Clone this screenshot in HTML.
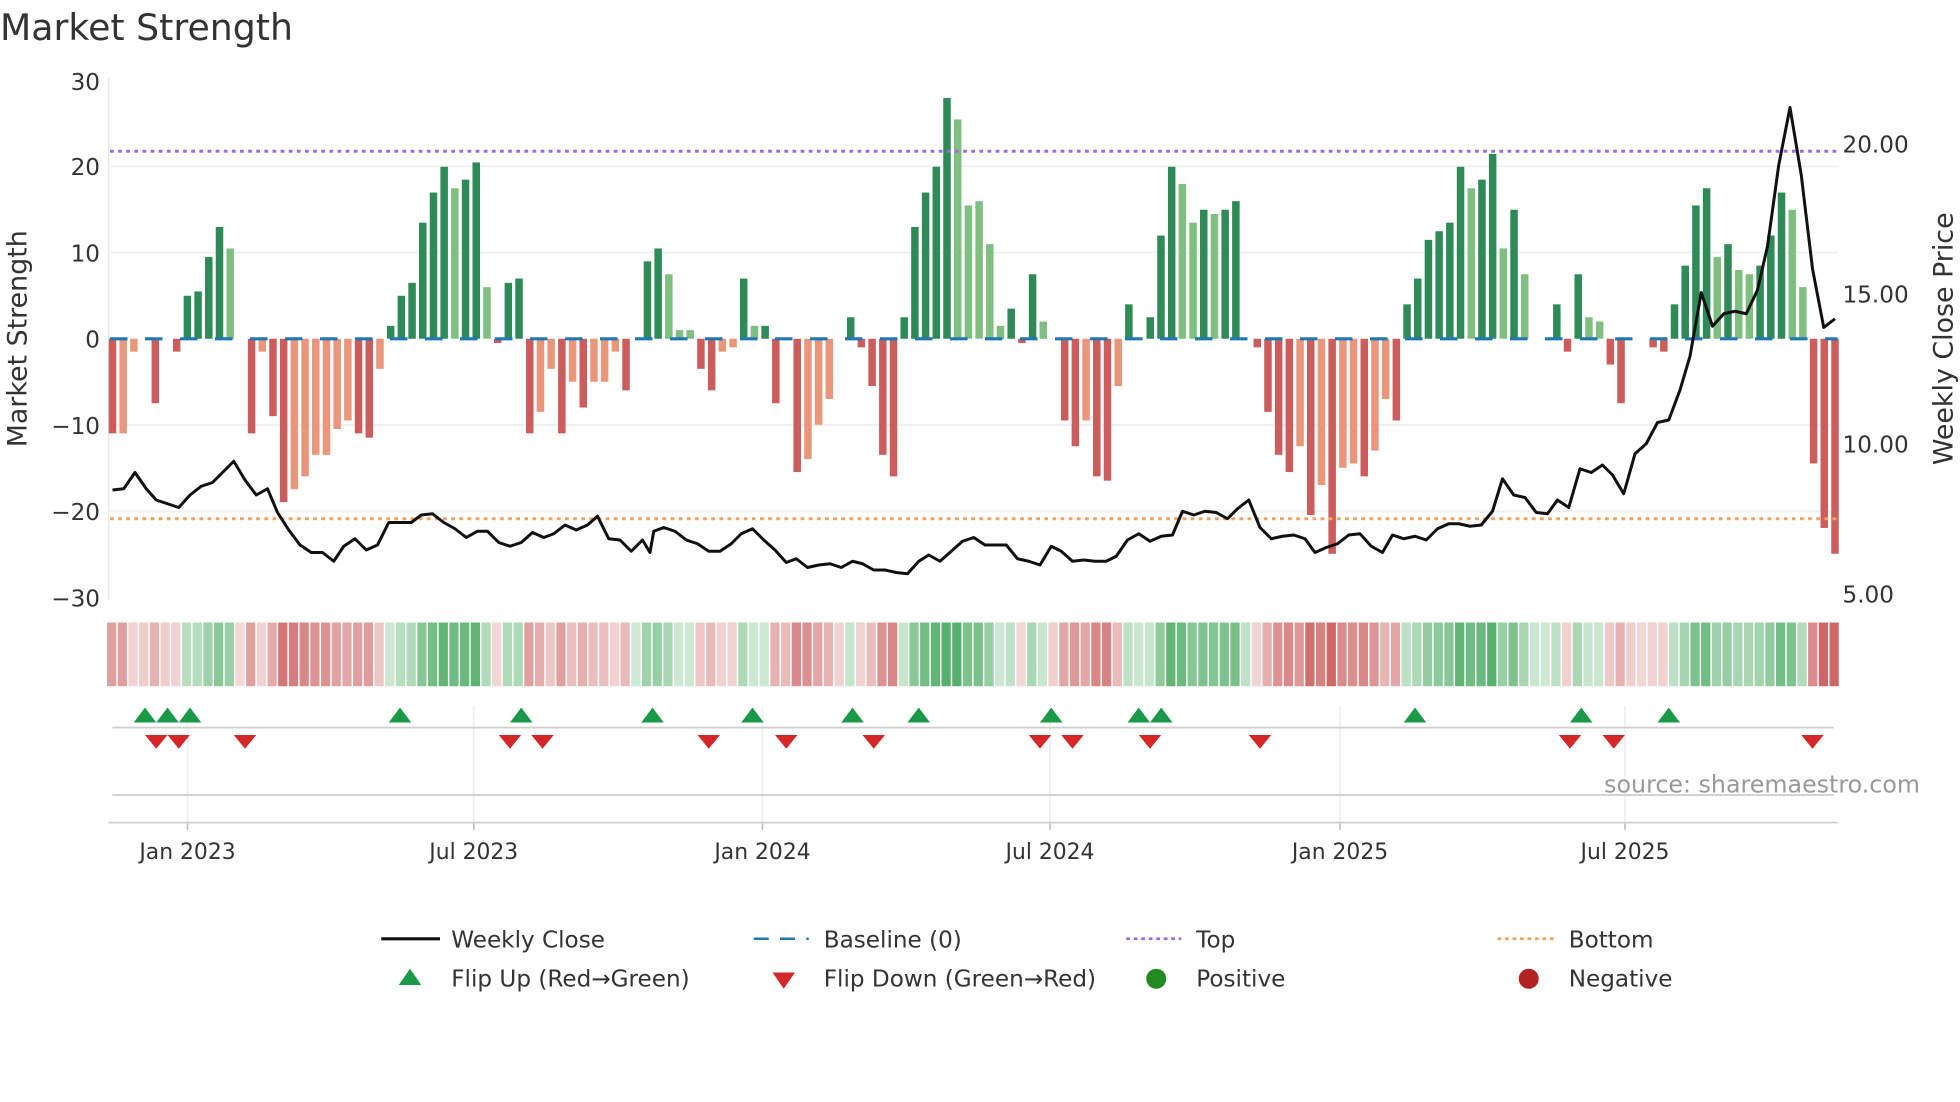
<!DOCTYPE html>
<html><head><meta charset="utf-8"><style>
html,body{margin:0;padding:0;background:#fff;width:1960px;height:1102px;overflow:hidden}
svg{display:block;font-family:"DejaVu Sans","Liberation Sans",sans-serif}
</style></head><body>
<svg id="s" width="1960" height="1102" viewBox="0 0 1568 881.6" xmlns="http://www.w3.org/2000/svg">
<rect width="1568" height="882" fill="#fff"/>
<text x="0" y="32" font-size="29" fill="#333">Market Strength</text>
<g id="grid"></g>
<g id="bars"></g>
<line x1="88" y1="271" x2="1470" y2="271" stroke="#1f77b4" stroke-width="2.5" stroke-dasharray="14,14"/>
<line x1="88" y1="121" x2="1470" y2="121" stroke="#9b6ee0" stroke-width="2.4" stroke-dasharray="3,3.5"/>
<line x1="88" y1="415" x2="1470" y2="415" stroke="#f4a261" stroke-width="2.4" stroke-dasharray="3,3.5"/>
<polyline id="price" fill="none" stroke="#111" stroke-width="2.4" stroke-linejoin="round"/>
<g id="strip"></g>
<g id="marks"></g>
<g font-size="18.5" fill="#333">
<text x="80" y="72" text-anchor="end">30</text>
<text x="80" y="140" text-anchor="end">20</text>
<text x="80" y="209" text-anchor="end">10</text>
<text x="80" y="278" text-anchor="end">0</text>
<text x="80" y="347" text-anchor="end">−10</text>
<text x="80" y="416" text-anchor="end">−20</text>
<text x="80" y="485" text-anchor="end">−30</text>
<text x="1474" y="122">20.00</text>
<text x="1474" y="242">15.00</text>
<text x="1474" y="362">10.00</text>
<text x="1474" y="482">5.00</text>
</g>
<text transform="translate(21,271) rotate(-90)" text-anchor="middle" font-size="21.5" fill="#333">Market Strength</text>
<text transform="translate(1562,271) rotate(-90)" text-anchor="middle" font-size="21.5" fill="#333">Weekly Close Price</text>
<text x="1536" y="634" text-anchor="end" font-size="19" fill="#999">source: sharemaestro.com</text>
<g font-size="17.5" fill="#333" text-anchor="middle">
<text x="150" y="687">Jan 2023</text><text x="379" y="687">Jul 2023</text><text x="610" y="687">Jan 2024</text>
<text x="840" y="687">Jul 2024</text><text x="1072" y="687">Jan 2025</text><text x="1300" y="687">Jul 2025</text>
</g>
<g font-size="18.5" fill="#333">
<line x1="305" y1="751" x2="352" y2="751" stroke="#111" stroke-width="2.5"/><text x="361" y="758">Weekly Close</text>
<line x1="603" y1="751" x2="647" y2="751" stroke="#1f77b4" stroke-width="2" stroke-dasharray="12,9"/><text x="659" y="758">Baseline (0)</text>
<line x1="901" y1="751" x2="945" y2="751" stroke="#9b6ee0" stroke-width="2.2" stroke-dasharray="3,3"/><text x="957" y="758">Top</text>
<line x1="1198" y1="751" x2="1243" y2="751" stroke="#f4a261" stroke-width="2.2" stroke-dasharray="3,3"/><text x="1255" y="758">Bottom</text>
<polygon points="319,788 337,788 328,775" fill="#1a9a48"/><text x="361" y="789">Flip Up (Red→Green)</text>
<polygon points="618,778 636,778 627,791" fill="#d62728"/><text x="659" y="789">Flip Down (Green→Red)</text>
<circle cx="925" cy="783" r="8" fill="#228b22"/><text x="957" y="789">Positive</text>
<circle cx="1223" cy="783" r="8" fill="#b22222"/><text x="1255" y="789">Negative</text>
</g>
</svg>
<script>
var NS="http://www.w3.org/2000/svg";
function el(p,t,a){var e=document.createElementNS(NS,t);for(var k in a)e.setAttribute(k,a[k]);document.getElementById(p).appendChild(e);return e;}
[133,202,340,409].forEach(function(y){el("grid","line",{x1:88,x2:1470,y1:y,y2:y,stroke:"#eef0f3","stroke-width":1.5});});
el("grid","line",{x1:87,x2:87,y1:62,y2:480,stroke:"#e6e6e6","stroke-width":1});
[150,379,610,840,1072,1300].forEach(function(x){el("grid","line",{x1:x,x2:x,y1:565,y2:658,stroke:"#eef0f5","stroke-width":1.5});el("grid","line",{x1:x,x2:x,y1:658,y2:664,stroke:"#bbb","stroke-width":1.2});});
el("grid","line",{x1:90,x2:1467,y1:582,y2:582,stroke:"#d0d0d0","stroke-width":1.5});
el("grid","line",{x1:90,x2:1467,y1:636,y2:636,stroke:"#d0d0d0","stroke-width":1.5});
el("grid","line",{x1:87,x2:1470,y1:658,y2:658,stroke:"#d0d0d0","stroke-width":1.5});
var B="-11r -11s -1.5s 0z -7.5r 0z -1.5r 5g 5.5g 9.5g 13g 10.5l 0z -11r -1.5s -9r -19r -17.5s -16s -13.5s -13.5s -10.5s -9.5s -11r -11.5r -3.5s 1.5g 5g 6.5g 13.5g 17g 20g 17.5l 18.5g 20.5g 6l -0.5r 6.5g 7g -11r -8.5s -3.5s -11r -5s -8r -5s -5s -1.5s -6r 0z 9g 10.5g 7.5l 1l 1l -3.5r -6r -1.5s -1s 7g 1.5l 1.5g -7.5r 0z -15.5r -14s -10s -7s 0z 2.5g -1r -5.5r -13.5r -16r 2.5g 13g 17g 20g 28g 25.5l 15.5l 16l 11l 1.5l 3.5g -0.5r 7.5g 2l 0z -9.5r -12.5r -9.5s -16r -16.5r -5.5s 4g 0z 2.5g 12g 20g 18l 13.5l 15g 14.5l 15g 16g 0z -1r -8.5r -13.5r -15.5r -12.5s -20.5r -17s -25r -15s -14.5s -16r -13s -7s -9.5r 4g 7g 11.5g 12.5g 13.5g 20g 17.5l 18.5g 21.5g 10.5l 15g 7.5l 0z 0z 4g -1.5r 7.5g 2.5l 2l -3r -7.5r 0z 0z -1r -1.5r 4g 8.5g 15.5g 17.5g 9.5l 11g 8l 7.5l 8.5g 12g 17g 15l 6l -14.5r -22r -25r".split(" ");
var N=B.length, x0=90, x1=1468, dx=(x1-x0)/(N-1);
var C={g:"#2e8b57",l:"#7fbf7f",r:"#cd5c5c",s:"#e9967a"};
var vals=[];
B.forEach(function(t,i){var v=parseFloat(t),c=t.slice(-1);vals.push(v);var x=x0+i*dx;
 if(c!="z"){var y0=271,y=271-v*6.88;el("bars","rect",{x:x-3,y:Math.min(y,y0),width:6,height:Math.max(Math.abs(y-y0),1.5),fill:C[c]});}});
vals.forEach(function(v,i){var x=x0+i*dx;var s=v;if(v==0){var a=vals[i-1]||0,b=vals[i+1]||0;s=(a+b)/4;}
 var m=Math.min(Math.abs(s)/22,1),al=0.22+0.65*m;var col=s>=0?"rgba(60,165,85,"+al+")":"rgba(200,80,80,"+al+")";
 el("strip","rect",{x:x-4.4,y:498,width:7.4,height:51,fill:col});});
var P=[[90,392],[99,391],[108,378],[117,391],[125,400],[134,403],[143,406],[152,396],[161,389],[170,386],[178,378],[187,369],[196,384],[205,396],[214,391],[222,410],[231,424],[240,436],[249,442],[258,442],[267,449],[275,437],[284,431],[293,440],[302,436],[311,418],[320,418],[329,418],[337,412],[346,411],[355,418],[364,423],[373,430],[382,425],[390,425],[399,434],[408,437],[417,434],[426,426],[435,430],[443,427],[452,420],[461,424],[470,420],[478,413],[487,431],[496,432],[505,441],[514,432],[520,442],[523,425],[531,422],[540,425],[549,432],[558,435],[567,441],[576,441],[585,435],[593,427],[602,423],[611,432],[620,440],[629,450],[637,447],[646,454],[655,452],[664,451],[673,454],[682,449],[690,451],[699,456],[708,456],[717,458],[726,459],[735,449],[743,444],[752,449],[761,441],[770,433],[779,430],[788,436],[796,436],[805,436],[814,447],[823,449],[832,452],[841,437],[849,441],[858,449],[867,448],[876,449],[885,449],[893,445],[902,432],[911,427],[920,433],[929,429],[938,428],[946,409],[955,412],[964,409],[973,410],[982,415],[990,407],[999,400],[1008,422],[1017,431],[1026,429],[1035,428],[1044,431],[1052,442],[1061,438],[1070,435],[1079,428],[1088,427],[1097,437],[1106,442],[1114,428],[1123,431],[1132,429],[1141,432],[1150,423],[1159,419],[1167,419],[1176,421],[1185,420],[1194,409],[1202,383],[1211,396],[1220,398],[1229,410],[1238,411],[1246,400],[1255,406],[1264,375],[1273,378],[1282,372],[1290,380],[1299,395],[1308,363],[1317,355],[1326,338],[1335,336],[1344,312],[1352,285],[1361,234],[1370,261],[1379,251],[1388,249],[1397,251],[1406,232],[1414,197],[1423,132],[1432,86],[1441,140],[1450,215],[1459,262],[1468,255]];
document.getElementById("price").setAttribute("points",P.map(function(p){return p.join(",");}).join(" "));
[116,134,152,320,417,522,602,682,735,841,911,929,1132,1265,1335].forEach(function(x){el("marks","polygon",{points:(x-9)+",578 "+(x+9)+",578 "+x+",566",fill:"#1a9a48"});});
[125,143,196,408,434,567,629,699,832,858,920,1008,1256,1291,1450].forEach(function(x){el("marks","polygon",{points:(x-9)+",588 "+(x+9)+",588 "+x+",599",fill:"#d62728"});});
</script>
</body></html>
